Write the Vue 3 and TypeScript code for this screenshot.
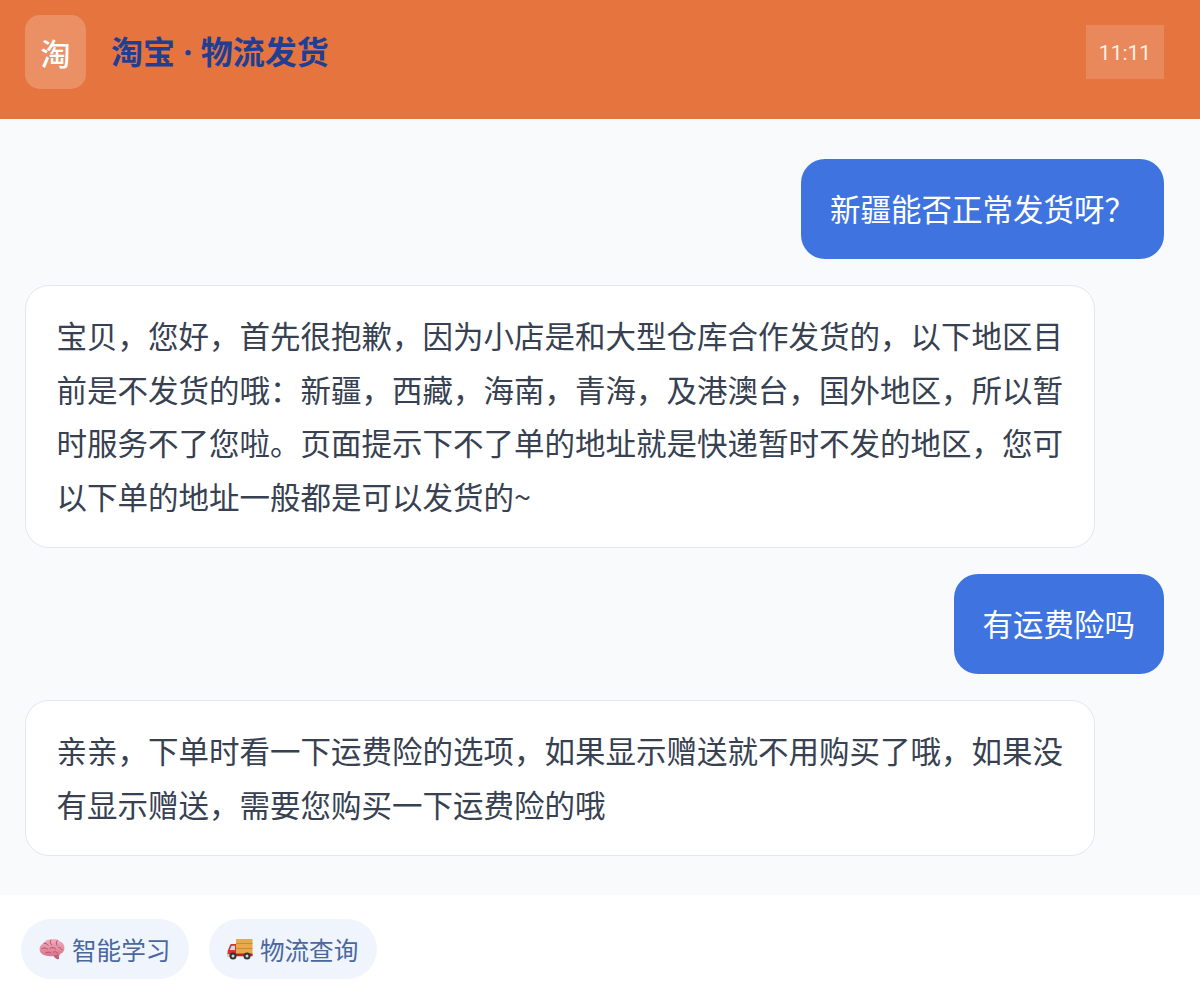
<script setup lang="ts">
interface Message {
  role: 'user' | 'bot'
  text: string
}

// \uFF0C \uFF1A \uFF1F are the full-width comma, colon and question mark
const messages: Message[] = [
  { role: 'user', text: '新疆能否正常发货呀\uFF1F' },
  {
    role: 'bot',
    text: '宝贝\uFF0C您好\uFF0C首先很抱歉\uFF0C因为小店是和大型仓库合作发货的\uFF0C以下地区目前是不发货的哦\uFF1A新疆\uFF0C西藏\uFF0C海南\uFF0C青海\uFF0C及港澳台\uFF0C国外地区\uFF0C所以暂时服务不了您啦。页面提示下不了单的地址就是快递暂时不发的地区\uFF0C您可以下单的地址一般都是可以发货的~',
  },
  { role: 'user', text: '有运费险吗' },
  {
    role: 'bot',
    text: '亲亲\uFF0C下单时看一下运费险的选项\uFF0C如果显示赠送就不用购买了哦\uFF0C如果没有显示赠送\uFF0C需要您购买一下运费险的哦',
  },
]
</script>

<template>
  <div class="page">
    <header class="top">
      <div class="logo">淘</div>
      <h1 class="title">淘宝 · 物流发货</h1>
      <div class="time">11:11</div>
    </header>

    <main class="chat">
      <div v-for="(m, i) in messages" :key="i" class="row" :class="m.role">
        <div class="bubble">{{ m.text }}</div>
      </div>
    </main>

    <footer class="bar">
      <button class="chip">
        <!-- brain emoji -->
        <svg class="emoji" viewBox="0 0 26 22">
          <defs>
            <linearGradient id="brainFill" x1="0" y1="0" x2="0" y2="1">
              <stop offset="0" stop-color="#f0aebb" />
              <stop offset="1" stop-color="#d9748b" />
            </linearGradient>
          </defs>
          <path d="M.6 11.500C.4 8.400 2.400 6 4.800 5.200 6 2.600 9.200 1 12.200 1.600c3-1.300 6.800-.6 8.600 1.800 2.800.7 4.800 3.300 4.600 6.400.3 2.900-1.500 5.200-4 6-.6 2-2.400 3.200-4.400 2.800-1.200.3-2.400 0-3.300-.7-2.400.6-4.700.3-6.800-.5C3.400 17.200.9 14.800.6 11.500z" fill="url(#brainFill)" />
          <path d="M14.600 17.400c.7 1.900 2 3.400 3.900 3.800 1.200.2 1.900-.7 1.600-1.800l-.7-3.200z" fill="#c25f78" />
          <path d="M4.800 5.200c1.800-.3 3.400.5 4.200 2M11.800 2c-1 1.700-.7 3.700 1 5M18.300 2.600c-1.300 1.500-1.400 3.200-.2 4.800M3.200 10.500c1.900-1 4-.8 5.400.6M11 10.200c1.900-1.100 4.300-.8 5.700.8M19.600 9.200c1.400.3 2.500 1.200 3.200 2.400M6.600 15c1.500-1.100 3.600-1.200 5.100-.2M14.400 14c1.500-.6 3.100-.2 4.200 1" fill="none" stroke="#b4506b" stroke-width="1" stroke-linecap="round" />
        </svg>
        <span>智能学习</span>
      </button>
      <button class="chip">
        <!-- delivery truck emoji -->
        <svg class="emoji" viewBox="0 0 26 22">
          <rect x="9" y="1" width="16.500" height="15.500" rx=".6" fill="#e9a84a" />
          <path d="M9 5.500h16.500M9 10.500h16.500" stroke="#cc8a35" stroke-width="1" />
          <path d="M.6 13l2.600-6.200c.2-.5.6-.8 1.200-.8H9v11H.6z" fill="#d8342b" />
          <path d="M2.700 12l1.900-4.300H8V12z" fill="#bfe0f2" />
          <rect x=".4" y="15.500" width="25.200" height="2.800" rx=".5" fill="#b4261f" />
          <rect x=".2" y="16.200" width="2.400" height="1.600" fill="#f2f2f2" />
          <circle cx="6" cy="18" r="3.500" fill="#333" />
          <circle cx="6" cy="18" r="1.500" fill="#d5d5d5" />
          <circle cx="20" cy="18" r="3.500" fill="#333" />
          <circle cx="20" cy="18" r="1.500" fill="#d5d5d5" />
        </svg>
        <span>物流查询</span>
      </button>
    </footer>
  </div>
</template>

<style>
body {
  background: #fff;
}
</style>

<style scoped>
.page {
  width: 1200px;
  height: 995px;
  overflow: hidden;
  display: flex;
  flex-direction: column;
  font-family: "Noto Sans CJK SC", "Noto Sans", sans-serif;
  background: #fff;
}

.top {
  height: 119px;
  box-sizing: border-box;
  padding: 15px 36px 0 25px;
  display: flex;
  align-items: flex-start;
  background: #e6743e;
}

.logo {
  width: 61px;
  height: 74px;
  border-radius: 15px;
  background: rgba(255, 255, 255, 0.2);
  color: #fff;
  font-size: 30px;
  font-weight: 500;
  display: flex;
  align-items: center;
  justify-content: center;
}

.title {
  margin: 0 0 0 25px;
  height: 74px;
  line-height: 76px;
  font-family: Inter, "Noto Sans CJK SC", sans-serif;
  font-size: 32px;
  font-weight: 700;
  color: #1f3f94;
  flex: 1;
}

.time {
  margin-top: 10px;
  width: 78px;
  height: 54px;
  line-height: 56px;
  text-align: center;
  font-family: Roboto, "Noto Sans", sans-serif;
  font-size: 21px;
  color: #fdf1ea;
  background: rgba(255, 255, 255, 0.15);
}

.chat {
  height: 776px;
  box-sizing: border-box;
  padding: 40px 36px 0 25px;
  background: #f8fafc;
  display: flex;
  flex-direction: column;
  gap: 26.5px;
}

.row {
  display: flex;
}

.row.user {
  justify-content: flex-end;
}

.bubble {
  font-size: 30.5px;
  line-height: 53.5px;
  box-sizing: border-box;
}

.user .bubble {
  padding: 23px 29px;
  border-radius: 24px;
  background: #3f74e0;
  color: #fff;
}

.bot .bubble {
  width: 1070px;
  padding: 23.25px 30.5px;
  border: 1px solid #e2e8f0;
  border-radius: 24px;
  background: #fff;
  color: #374151;
}

.bar {
  flex: 1;
  padding: 24px 21px 0;
  display: flex;
  align-items: flex-start;
  gap: 20px;
  background: #fff;
}

.chip {
  height: 60px;
  padding: 0 18.5px 0 18px;
  border: none;
  border-radius: 30px;
  background: #eff4fd;
  color: #4a689e;
  font-family: inherit;
  font-size: 24.6px;
  display: flex;
  align-items: center;
  gap: 7px;
}

.emoji {
  width: 26px;
  height: 22px;
}
</style>
